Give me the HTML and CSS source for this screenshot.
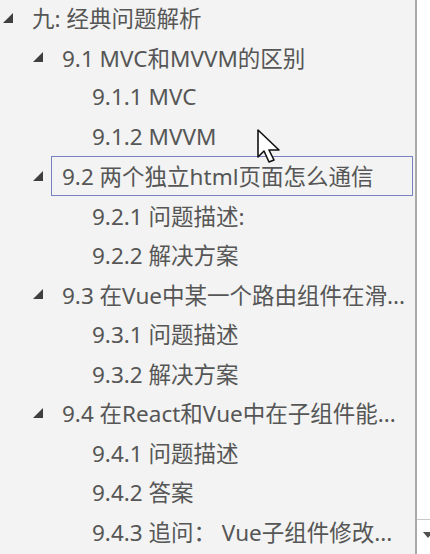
FILE: index.html
```html
<!DOCTYPE html>
<html lang="zh-CN">
<head>
<meta charset="utf-8">
<title>目录</title>
<link rel="stylesheet" href="styles.css">
</head>
<body>
<div class="window">
  <div class="tree">
    <div class="row lv0"><span class="toggle"><svg width="10" height="10" viewBox="0 0 10 10"><polygon points="10,0 10,10 0,10"/></svg></span><span class="label">九: 经典问题解析</span></div>
    <div class="row lv1"><span class="toggle"><svg width="10" height="10" viewBox="0 0 10 10"><polygon points="10,0 10,10 0,10"/></svg></span><span class="label">9.1 MVC和MVVM的区别</span></div>
    <div class="row lv2"><span class="toggle"></span><span class="label">9.1.1 MVC</span></div>
    <div class="row lv2"><span class="toggle"></span><span class="label">9.1.2 MVVM</span></div>
    <div class="row lv1"><span class="toggle"><svg width="10" height="10" viewBox="0 0 10 10"><polygon points="10,0 10,10 0,10"/></svg></span><span class="label focused">9.2 两个独立html页面怎么通信</span></div>
    <div class="row lv2"><span class="toggle"></span><span class="label">9.2.1 问题描述:</span></div>
    <div class="row lv2"><span class="toggle"></span><span class="label">9.2.2 解决方案</span></div>
    <div class="row lv1"><span class="toggle"><svg width="10" height="10" viewBox="0 0 10 10"><polygon points="10,0 10,10 0,10"/></svg></span><span class="label">9.3 在Vue中某一个路由组件在滑...</span></div>
    <div class="row lv2"><span class="toggle"></span><span class="label">9.3.1 问题描述</span></div>
    <div class="row lv2"><span class="toggle"></span><span class="label">9.3.2 解决方案</span></div>
    <div class="row lv1"><span class="toggle"><svg width="10" height="10" viewBox="0 0 10 10"><polygon points="10,0 10,10 0,10"/></svg></span><span class="label">9.4 在React和Vue中在子组件能...</span></div>
    <div class="row lv2"><span class="toggle"></span><span class="label">9.4.1 问题描述</span></div>
    <div class="row lv2"><span class="toggle"></span><span class="label">9.4.2 答案</span></div>
    <div class="row lv2"><span class="toggle"></span><span class="label">9.4.3 追问： Vue子组件修改...</span></div>
  </div>
  <div class="scrollbar">
    <div class="track"></div>
    <div class="btn-down"><svg width="10" height="6" viewBox="0 0 10 6"><polygon points="0,0 10,0 5,6"/></svg></div>
  </div>
  <svg class="cursor" width="26" height="36" viewBox="-1 -1 26 36"><path d="M0,0 L0,27 L6,21 L11,32 L16,30 L11,20 L21,20 Z"/></svg>
</div>
</body>
</html>
```
FILE: styles.css
```css
html, body {
  margin: 0;
  padding: 0;
  background: #f2f3f2;
}
.window {
  position: relative;
  width: 430px;
  height: 554px;
  display: flex;
  overflow: hidden;
  background: #f2f3f2;
  font-family: "Noto Sans", "Noto Sans CJK SC", sans-serif;
  font-size: 22.5px;
  color: #565656;
}
.tree {
  width: 415px;
  margin-top: -2px;
  display: flex;
  flex-direction: column;
}
.row {
  height: 39.5px;
  display: flex;
  align-items: stretch;
  flex-shrink: 0;
}
.lv0 { padding-left: 0; }
.lv1 { padding-left: 30px; }
.lv2 { padding-left: 60px; }
.toggle {
  width: 22px;
  flex-shrink: 0;
  display: flex;
  align-items: center;
}
.toggle svg {
  margin-left: 3px;
  fill: #3f3f3f;
}
.label {
  flex: 1;
  display: flex;
  align-items: center;
  padding-left: 10px;
  margin-right: 2px;
  white-space: nowrap;
  overflow: hidden;
  border: 1px solid transparent;
  margin-left: -1px;
}
.label.focused {
  border-color: #7880c4;
}
.scrollbar {
  width: 13px;
  flex-shrink: 0;
  border-left: 2px solid #a9a9a9;
  background: #ffffff;
  display: flex;
  flex-direction: column;
}
.track {
  flex: 1;
}
.btn-down {
  height: 35px;
  border-top: 1px solid #c8c8c8;
  display: flex;
  align-items: flex-start;
  padding-top: 12px;
  padding-left: 6px;
  box-sizing: border-box;
}
.btn-down svg {
  fill: #505050;
  flex-shrink: 0;
}
.cursor {
  position: absolute;
  left: 257px;
  top: 129px;
}
.cursor path {
  fill: #ffffff;
  stroke: #111111;
  stroke-width: 1.6;
  stroke-linejoin: round;
}
```
